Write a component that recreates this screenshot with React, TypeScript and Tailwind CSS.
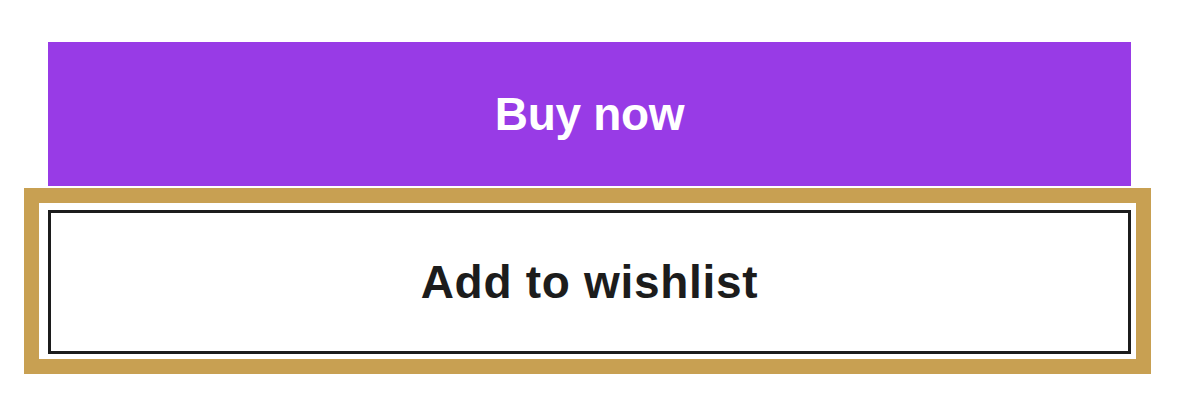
export default function App() {
    return (
        <div
            className="w-[1179px] h-[403px] bg-white pl-[48px] pt-[42px]"
            style={{ fontFamily: '"Liberation Sans", Arial, sans-serif' }}
        >
            <div className="flex flex-col w-[1083px]">
                {/* Primary action */}
                <button className="flex items-center justify-center h-[144px] w-full bg-[#983be6] text-white text-[46px] font-bold tracking-[-0.3px]">
                    Buy now
                </button>

                {/* Focused secondary action with gold focus ring */}
                <div className="ml-[-24px] mt-[2px] w-[1127px] border-[15px] border-[#c8a052] pt-[7px] pl-[9px] pr-[6px] pb-[5px]">
                    <button className="flex items-center justify-center h-[144px] w-[1083px] border-[3px] border-[#1c1c1c] bg-white text-[#1c1c1c] text-[46px] font-bold tracking-[0.7px]">
                        Add to wishlist
                    </button>
                </div>
            </div>
        </div>
    );
}
